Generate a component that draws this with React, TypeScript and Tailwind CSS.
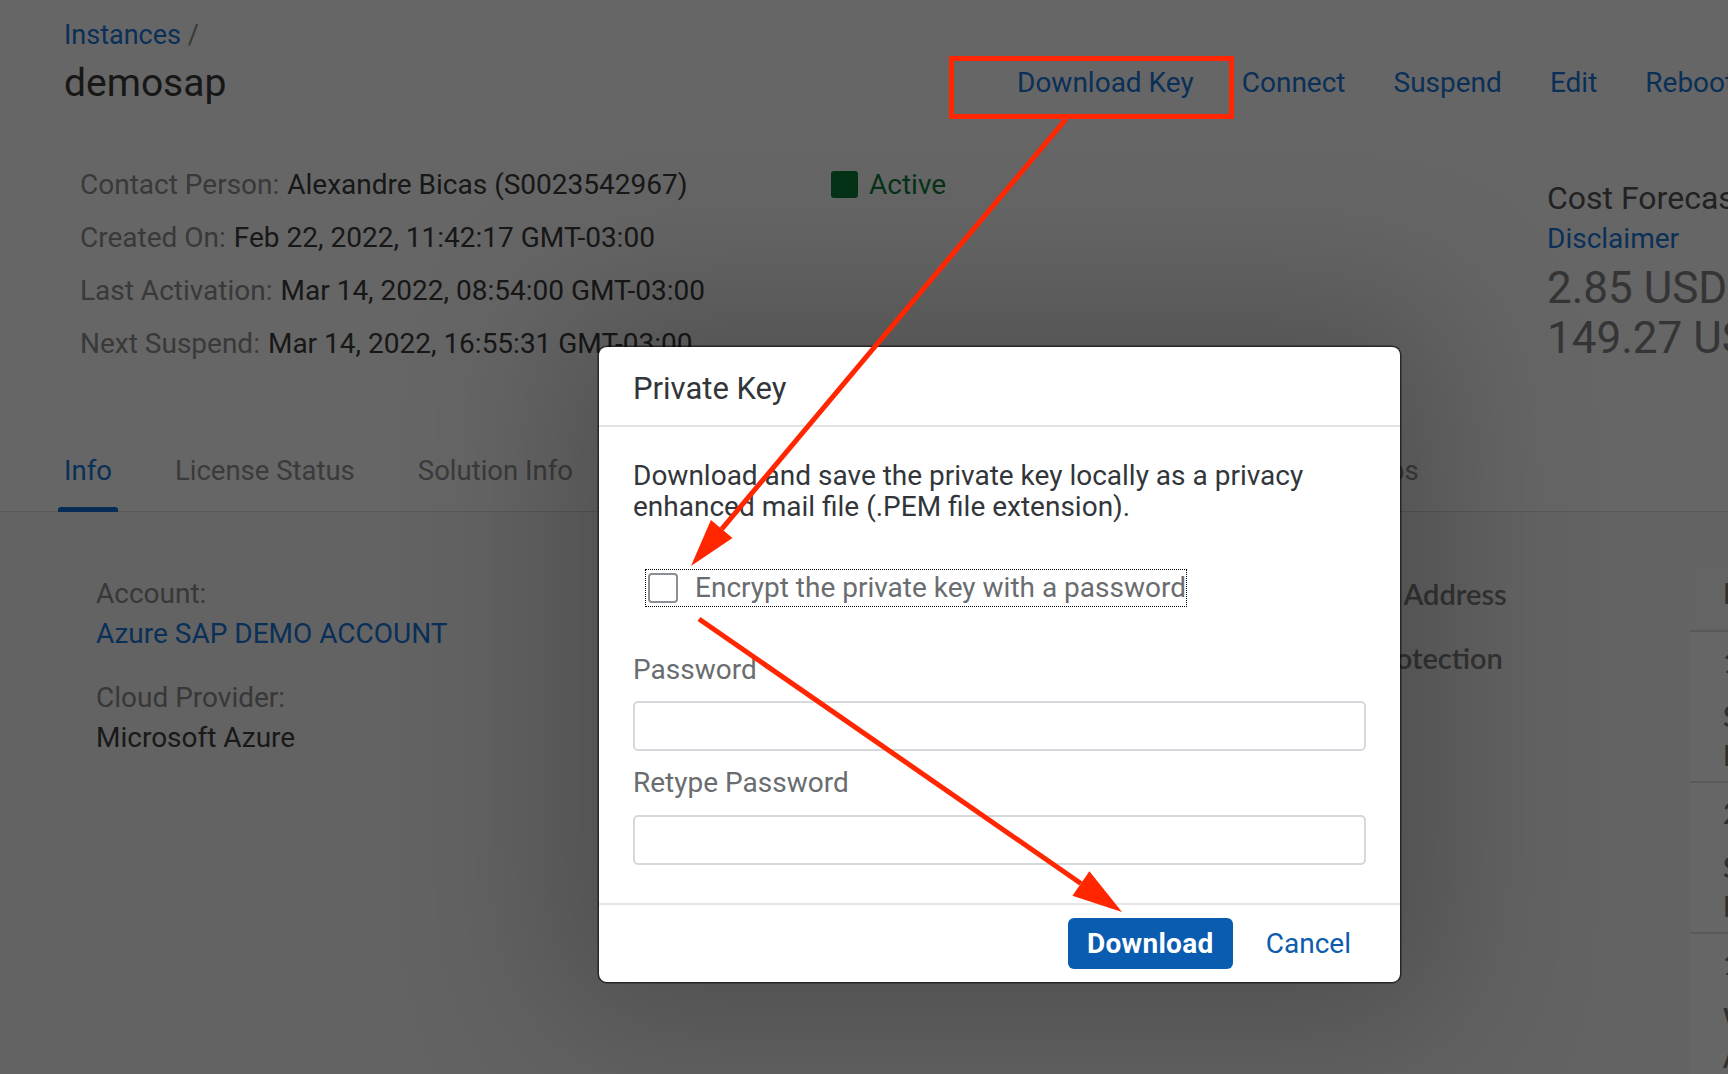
import React from "react";

function InfoRow({ label, value }: { label: string; value: string }) {
  return (
    <div className="h-[53px] flex items-center whitespace-nowrap">
      <span className="text-[#8f8f8f]">{label}</span>
      <span className="ml-[8px] text-[#3c3c3c]">{value}</span>
    </div>
  );
}

function TableRow({ a, b, c }: { a: string; b: string; c: string }) {
  return (
    <div className="h-[151px] border-t-2 border-[#dedede] bg-white pl-[33px] pt-[12px] text-[28px] text-[#7a7a7a] whitespace-nowrap font-[Lato,sans-serif] font-semibold">
      <div className="h-[36px] leading-[36px]">{a}</div>
      <div className="mt-[17px] h-[39px] leading-[39px]">{b}</div>
      <div className="h-[39px] leading-[39px]">{c}</div>
    </div>
  );
}

export default function App() {
  const tabs = ["License Status", "Solution Info", "Activity Log", "Access Rules", "Schedules"];
  return (
    <div className="relative w-[1728px] h-[1074px] overflow-hidden bg-[#f7f7f7] font-[Roboto,sans-serif]">
      {/* Page header */}
      <header className="h-[512px] bg-white flex flex-col">
        <div className="pl-[64px] pt-[18px] h-[52px] text-[27px] leading-[35px] whitespace-nowrap">
          <span className="text-[#1a78dc]">Instances</span>
          <span className="text-[#8f8f8f]"> /</span>
        </div>
        <div className="flex items-center h-[62px]">
          <h1 className="w-[1017px] flex-none pl-[64px] text-[39px] leading-[62px] text-[#3a3a3a]">demosap</h1>
          <nav className="flex-none flex items-center gap-[48px] text-[28px] text-[#1a78dc] whitespace-nowrap">
            <span>Download Key</span>
            <span>Connect</span>
            <span>Suspend</span>
            <span>Edit</span>
            <span>Reboot</span>
          </nav>
        </div>
        <div className="mt-[44px] flex pl-[80px] text-[28px]">
          <div className="w-[751px] flex-none">
            <InfoRow label="Contact Person:" value="Alexandre Bicas (S0023542967)" />
            <InfoRow label="Created On:" value="Feb 22, 2022, 11:42:17 GMT-03:00" />
            <InfoRow label="Last Activation:" value="Mar 14, 2022, 08:54:00 GMT-03:00" />
            <InfoRow label="Next Suspend:" value="Mar 14, 2022, 16:55:31 GMT-03:00" />
          </div>
          <div className="w-[716px] flex-none h-[53px] flex items-center gap-[11px]">
            <span className="w-[27px] h-[27px] rounded-[3px] bg-[#107e3e]" />
            <span className="text-[#107e3e]">Active</span>
          </div>
          <div className="flex-none whitespace-nowrap mt-[22px]">
            <div className="h-[36px] leading-[36px] text-[32px] text-[#555555]">Cost Forecast</div>
            <div className="mt-[6px] h-[34px] leading-[34px] text-[28px] text-[#1a78dc]">Disclaimer</div>
            <div className="mt-[7px] h-[50px] leading-[50px] text-[44px] text-[#868686]">2.85 USD</div>
            <div className="h-[50px] leading-[50px] text-[44px] text-[#868686]">149.27 USD</div>
          </div>
        </div>
        <div className="mt-auto h-[82px] border-b border-[#dcdcdc] flex items-stretch pl-[64px] gap-[63px] text-[27.5px] whitespace-nowrap">
          <div className="relative flex items-center text-[#1a78dc]">
            Info
            <span className="absolute left-[-6px] right-[-6px] bottom-[-1px] h-[5px] rounded-t-[3px] bg-[#0a6ed1]" />
          </div>
          {tabs.map((t) => (
            <div key={t} className="flex items-center text-[#949494]">
              {t}
            </div>
          ))}
          <div className="ml-[55px] flex items-center text-[#949494]">Backups</div>
        </div>
      </header>

      {/* Content */}
      <main className="flex text-[28px]">
        <div className="w-[1368px] flex-none pl-[96px] pt-[62px] whitespace-nowrap">
          <div className="h-[40px] leading-[40px] text-[#8c8c8c]">Account:</div>
          <div className="h-[40px] leading-[40px] text-[#1a78dc]">Azure SAP DEMO ACCOUNT</div>
          <div className="mt-[24px] h-[40px] leading-[40px] text-[#8c8c8c]">Cloud Provider:</div>
          <div className="h-[40px] leading-[40px] text-[#404040]">Microsoft Azure</div>
        </div>
        <div className="w-[322px] flex-none pt-[62px] whitespace-nowrap font-[Lato,sans-serif] font-semibold text-[29px] text-[#808080]">
          <div className="h-[40px] leading-[40px] pl-[4px]">IP Address</div>
          <div className="mt-[24px] h-[40px] leading-[40px]">Protection</div>
        </div>
        <div className="w-[400px] flex-none mt-[52px]">
          <div className="h-[66px] bg-[#f9f9f9] pl-[33px] pt-[11px] leading-[36px] text-[28px] text-[#7a7a7a] font-[Lato,sans-serif] font-semibold whitespace-nowrap">
            Event
          </div>
          <TableRow a="1 Job" b="Suspend" c="Hourly" />
          <TableRow a="2 Jobs" b="Start" c="Hourly" />
          <TableRow a="1 Job" b="Weekly" c="Automatic" />
        </div>
      </main>

      {/* Overlay */}
      <div className="absolute inset-0 bg-black/60" />

      {/* Dialog */}
      <div className="absolute left-[599px] top-[347px] w-[801px] h-[635px] bg-white rounded-[8px] flex flex-col shadow-[0_0_0_1.5px_rgba(0,0,0,0.55),0_0_160px_40px_rgba(0,0,0,0.22)]">
        <div className="h-[80px] flex-none px-[34px] pt-[6px] flex items-center border-b-2 border-[#e2e2e2] text-[31px] text-[#32363a]">
          Private Key
        </div>
        <div className="flex-1 px-[34px] pt-[33px]">
          <p className="text-[28px] leading-[31px] text-[#32363a] whitespace-nowrap">
            Download and save the private key locally as a privacy
            <br />
            enhanced mail file (.PEM file extension).
          </p>
          <div className="mt-[47px] ml-[12px] inline-flex h-[38px] items-center border border-dotted border-black pl-[2px]">
            <span className="w-[30px] h-[30px] rounded-[4px] border-2 border-[#8a8f96] bg-white" />
            <span className="ml-[17px] text-[28px] leading-[36px] text-[#6a6d70] whitespace-nowrap">
              Encrypt the private key with a password
            </span>
          </div>
          <div className="mt-[42px] h-[36px] leading-[36px] text-[28px] text-[#6a6d70]">Password</div>
          <div className="mt-[13px] h-[50px] rounded-[5px] border-2 border-[#d5d8dc] bg-white" />
          <div className="mt-[14px] h-[36px] leading-[36px] text-[28px] text-[#6a6d70]">Retype Password</div>
          <div className="mt-[14px] h-[50px] rounded-[5px] border-2 border-[#d5d8dc] bg-white" />
        </div>
        <div className="h-[79px] flex-none border-t-2 border-[#e5e5e5] flex items-center justify-end pr-[34px] gap-[18px]">
          <button className="h-[51px] w-[165px] rounded-[6px] bg-[#0a5cb0] text-white font-bold text-[28px] tracking-[0.3px]">
            Download
          </button>
          <button className="px-[15px] text-[28px] text-[#0b5cad]">Cancel</button>
        </div>
      </div>

      {/* Annotations */}
      <svg className="absolute inset-0 pointer-events-none" width="1728" height="1074" viewBox="0 0 1728 1074">
        <rect x="951.5" y="58.5" width="280" height="58" fill="none" stroke="#ff2600" strokeWidth="5" />
        <line x1="1066" y1="119" x2="721.7" y2="529.1" stroke="#ff2600" strokeWidth="5" />
        <polygon points="691,566 732.5,538.1 710.9,520.1" fill="#ff2600" />
        <line x1="699" y1="619" x2="1080.9" y2="883.5" stroke="#ff2600" strokeWidth="5" />
        <polygon points="1122,912 1072.4,895.8 1089.4,871.2" fill="#ff2600" />
      </svg>
    </div>
  );
}
